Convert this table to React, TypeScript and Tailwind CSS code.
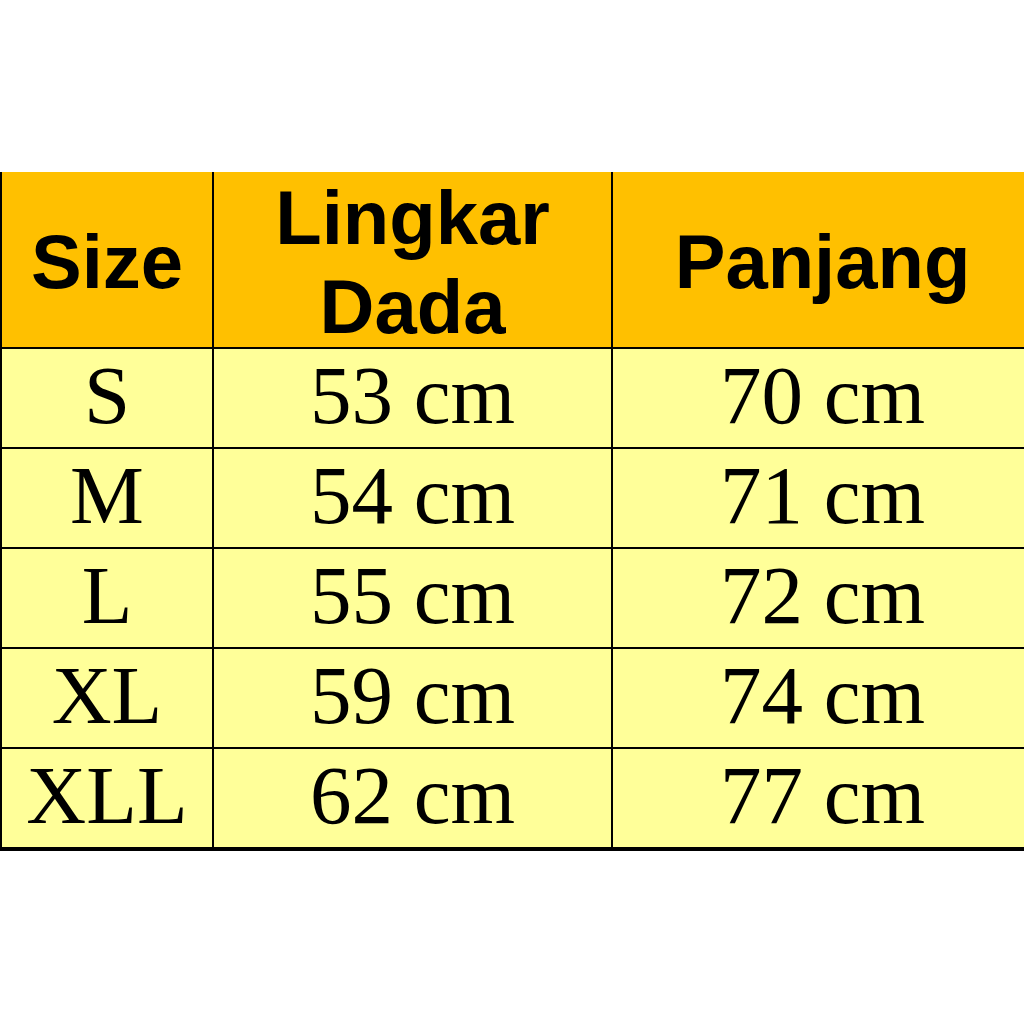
import React from "react";

const rows: [string, string, string][] = [
  ["S", "53 cm", "70 cm"],
  ["M", "54 cm", "71 cm"],
  ["L", "55 cm", "72 cm"],
  ["XL", "59 cm", "74 cm"],
  ["XLL", "62 cm", "77 cm"],
];

export default function App() {
  const head =
    "bg-[#FFC000] flex items-center justify-center text-center text-black font-bold text-[76px] leading-[89px] pt-[4px] [font-family:'Liberation_Sans',Arial,sans-serif]";
  const cell =
    "bg-[#FFFF99] flex items-center justify-center text-black text-[83px] leading-none pb-[6px] [font-family:'Liberation_Serif','Times_New_Roman',serif]";
  return (
    <div className="w-[1024px] h-[1024px] bg-white overflow-hidden pt-[172px]">
      <div className="bg-black pl-[2px] pb-[4px] grid grid-cols-[210px_397px_411px] grid-rows-[175px_repeat(5,98px)] gap-[2px]">
        <div className={head}>Size</div>
        <div className={head}>
          Lingkar
          <br />
          Dada
        </div>
        <div className={head + " pl-[8px]"}>Panjang</div>
        {rows.map((r) => (
          <React.Fragment key={r[0]}>
            <div className={cell}>{r[0]}</div>
            <div className={cell}>{r[1]}</div>
            <div className={cell + " pl-[8px]"}>{r[2]}</div>
          </React.Fragment>
        ))}
      </div>
    </div>
  );
}
